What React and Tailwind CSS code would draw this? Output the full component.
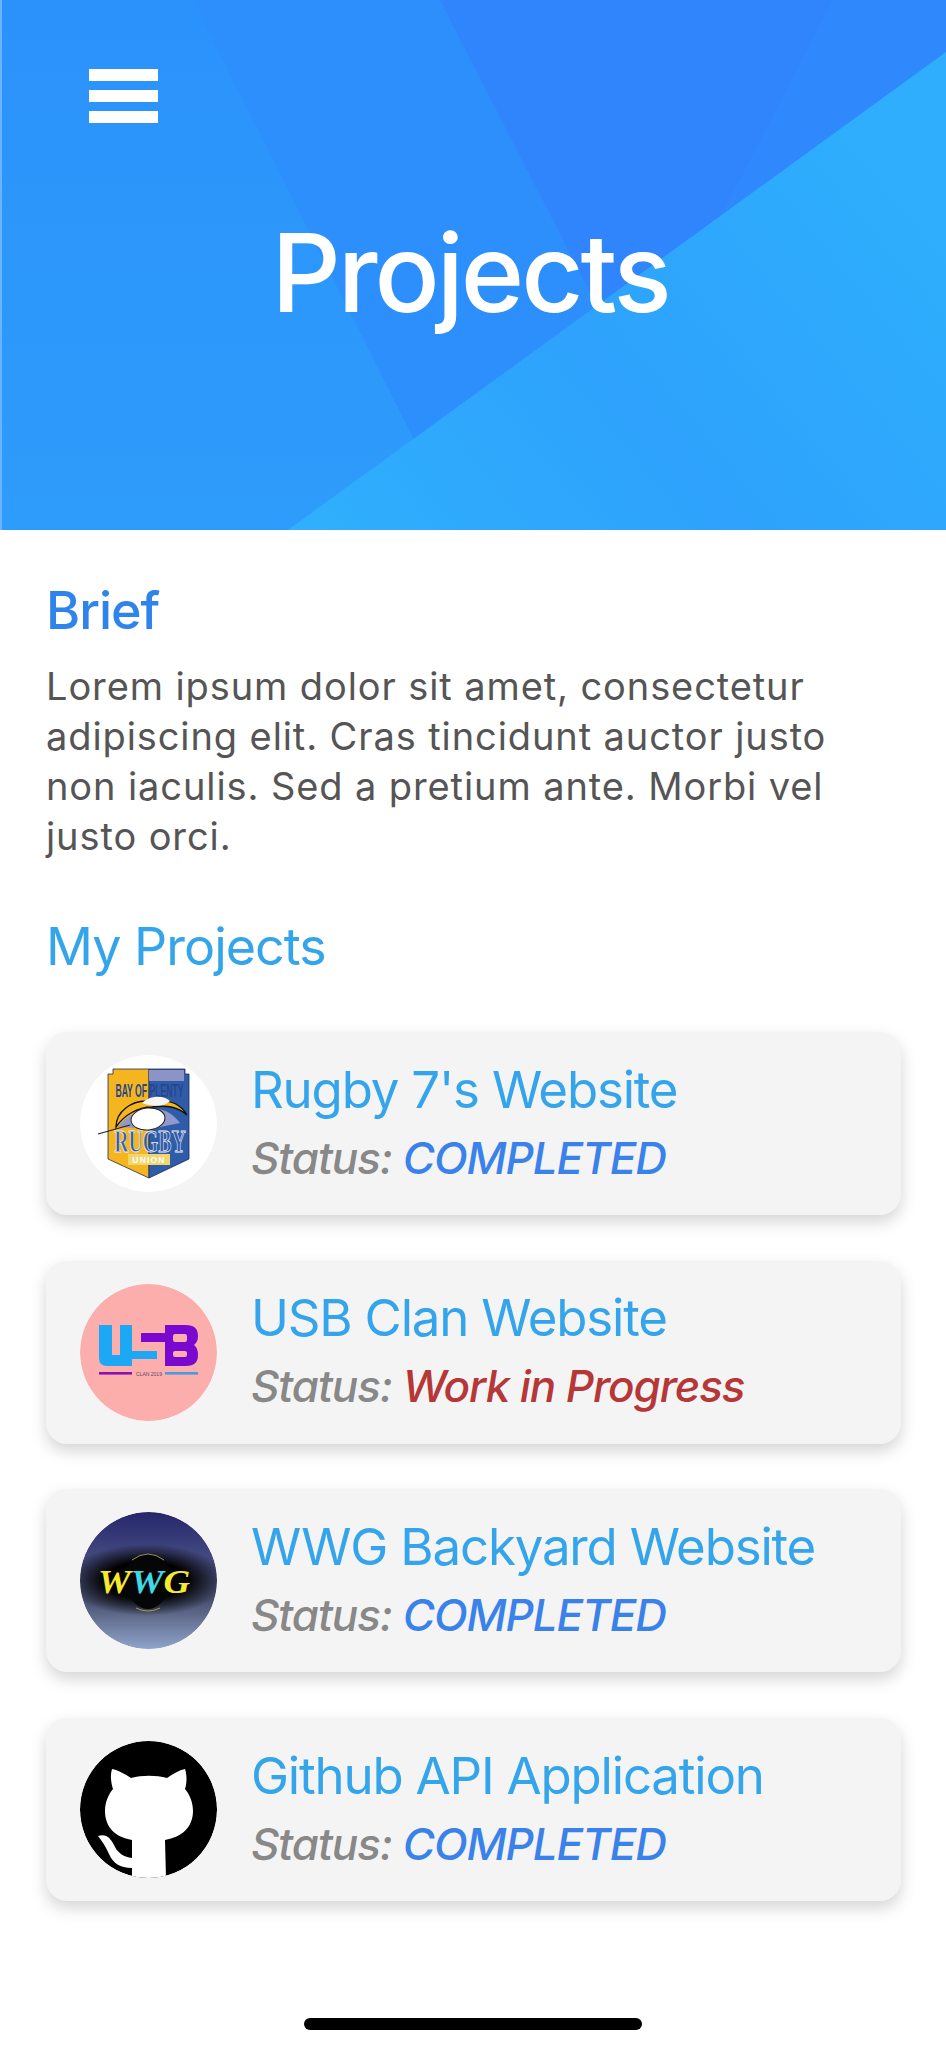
import React from 'react';

const projects = [
    { name: "Rugby 7's Website", status: 'COMPLETED', logo: 'rugby' },
    { name: 'USB Clan Website', status: 'Work in Progress', logo: 'usb' },
    { name: 'WWG Backyard Website', status: 'COMPLETED', logo: 'wwg' },
    { name: 'Github API Application', status: 'COMPLETED', logo: 'github' },
];

const HeaderArt = () => (
    <svg className="absolute inset-0 w-full h-full" viewBox="0 0 946 530" preserveAspectRatio="none">
        <defs>
            <linearGradient id="hbase" x1="0" y1="0" x2="0" y2="1">
                <stop offset="0" stopColor="#2b92fb" />
                <stop offset="1" stopColor="#2e9cfb" />
            </linearGradient>
            <linearGradient id="hlight" x1="0" y1="1" x2="1" y2="0.4">
                <stop offset="0" stopColor="#2fb0fc" />
                <stop offset="0.5" stopColor="#2ea2fc" />
                <stop offset="1" stopColor="#2eaefc" />
            </linearGradient>
        </defs>
        <rect width="946" height="530" fill="url(#hbase)" />
        <rect width="2" height="530" fill="#6ab4fb" />
        <polygon points="193,0 946,0 946,52 415,442" fill="#2d8ffc" />
        <polygon points="440,0 946,0 946,52 598,308" fill="#3085fd" />
        <polygon points="833,0 946,0 946,52 720,218" fill="#2f89fd" />
        <polygon points="946,52 946,530 288,530" fill="url(#hlight)" />
    </svg>
);

const RugbyLogo = () => (
    <svg viewBox="0 0 137 137" className="w-full h-full">
        <circle cx="68.5" cy="68.5" r="68.5" fill="#ffffff" />
        <polygon points="33,14 69,14 69,123 28,104 28,19 33,19" fill="#f4b51e" stroke="#1d2a55" strokeWidth="0.8" />
        <polygon points="69,14 105,14 105,19 109,19 109,104 69,123" fill="#2f5ca8" stroke="#1d2a55" strokeWidth="0.8" />
        <polygon points="69,15 104,15 104,26 69,26" fill="#8e93c6" />
        <text transform="translate(69.5 42) scale(0.48 1)" textAnchor="middle" fontFamily="'Liberation Sans', sans-serif" fontWeight="700" fontSize="18" fill="#27458e">BAY OF PLENTY</text>
        <path d="M36 72 C36 56 52 46 66 46 C80 44 98 44 107 60 C98 52 88 50 72 52 C58 52 44 60 36 72Z" fill="#f4b51e" stroke="#111111" strokeWidth="1.4" />
        <path d="M38 72 C46 60 60 54 74 54 C86 54 94 60 100 68 L70 74Z" fill="#9298c9" />
        <path d="M62 48 C70 40 84 40 90 46 C84 52 72 52 62 48Z" fill="#f6f6f6" />
        <ellipse cx="68" cy="64" rx="17" ry="11" fill="#ffffff" stroke="#222222" strokeWidth="1" transform="rotate(-6 68 64)" />
        <path d="M18 79 L50 70" stroke="#222222" strokeWidth="1.2" />
        <text transform="translate(70 97) scale(0.62 1)" textAnchor="middle" fontFamily="'Liberation Serif', serif" fontWeight="700" fontSize="32" fill="#2f5ca8" stroke="#f0f0f8" strokeWidth="0.8">RUGBY</text>
        <rect x="48" y="99" width="42" height="11" fill="#f2d66b" />
        <text x="69" y="108" textAnchor="middle" fontFamily="'Liberation Sans', sans-serif" fontWeight="700" fontSize="8.5" letterSpacing="1.2" fill="#ffffff">UNION</text>
    </svg>
);

const UsbLogo = () => (
    <svg viewBox="0 0 137 137" className="w-full h-full">
        <circle cx="68.5" cy="68.5" r="68.5" fill="#fbaeac" />
        <path d="M19 41 H32 V71 H40 V41 H52 V67 H77 V75 H52 V82 H27 Q19 82 19 74Z" fill="#1ca8f4" />
        <path d="M61 49 H85 V41 H106 Q118 41 118 52 Q118 58 114 61 Q118 64 118 71 Q118 82 106 82 H85 V58 H61Z" fill="#7a08cf" />
        <rect x="93" y="50" width="14" height="8" rx="2" fill="#fbaeac" />
        <rect x="93" y="67" width="14" height="6" rx="2" fill="#fbaeac" />
        <rect x="19" y="88" width="33" height="2.6" fill="#8a10b8" />
        <text x="69" y="91.5" textAnchor="middle" fontFamily="'Liberation Sans', sans-serif" fontSize="5" fill="#5b4a66">CLAN 2019</text>
        <rect x="85" y="88" width="33" height="2.6" fill="#4a9ae0" />
    </svg>
);

const WwgLogo = () => (
    <svg viewBox="0 0 137 137" className="w-full h-full">
        <defs>
            <linearGradient id="wwgbg" x1="0" y1="0" x2="0" y2="1">
                <stop offset="0" stopColor="#25266a" />
                <stop offset="0.3" stopColor="#42477f" />
                <stop offset="0.65" stopColor="#4a5270" />
                <stop offset="1" stopColor="#8fa3cb" />
            </linearGradient>
            <radialGradient id="wwgglow" cx="0.5" cy="0.5" r="0.5">
                <stop offset="0.5" stopColor="#000000" />
                <stop offset="1" stopColor="#000000" stopOpacity="0" />
            </radialGradient>
        </defs>
        <circle cx="68.5" cy="68.5" r="68.5" fill="url(#wwgbg)" />
        <ellipse cx="66" cy="68" rx="80" ry="36" fill="url(#wwgglow)" />
        <path d="M26 68 C48 62 52 42 68 42 C84 42 88 62 110 68 C88 74 84 97 68 97 C52 97 48 74 26 68Z" fill="#060606" />
        <path d="M52 48 Q68 36 84 48" fill="none" stroke="#b9b44a" strokeWidth="0.8" />
        <path d="M56 96 Q68 102 80 96" fill="none" stroke="#b9b44a" strokeWidth="0.8" />
        <text x="64" y="81" textAnchor="middle" fontFamily="'Liberation Serif', serif" fontWeight="700" fontStyle="italic" fontSize="34" textLength="92" lengthAdjust="spacingAndGlyphs" fill="#f7e92e">W<tspan fill="#3fd8e6">W</tspan>G</text>
    </svg>
);

const GithubLogo = () => (
    <svg viewBox="0 0 137 137" className="w-full h-full">
        <clipPath id="ghclip"><circle cx="68.5" cy="68.5" r="68.5" /></clipPath>
        <circle cx="68.5" cy="68.5" r="68.5" fill="#000000" />
        <g clipPath="url(#ghclip)" fill="#ffffff">
            <path d="M32 28 C38 29 45 33 51 37 C62 34 76 34 87 37 C93 33 99 29 105 28 C107 34 107 42 105 48 C110 54 113 62 113 70 C113 86 102 96 85 99 L86 137 H52 L52 99 C35 96 25 86 25 70 C25 62 28 54 33 48 C31 42 30 34 32 28Z" />
            <path d="M18 95 C26 92 31 97 35 106 C38 112 44 116 52 117 V127 C40 127 33 122 29 113 C26 106 22 100 18 95Z" />
        </g>
    </svg>
);

const logos = { rugby: RugbyLogo, usb: UsbLogo, wwg: WwgLogo, github: GithubLogo };

const ProjectCard = ({ name, status, logo }) => {
    const Logo = logos[logo];
    return (
        <div className="flex items-center h-[183px] pl-[34px] rounded-[21px] bg-[#f4f4f4] shadow-[0_7px_16px_rgba(0,0,0,0.17)]">
            <div className="w-[137px] h-[137px] shrink-0 rounded-full overflow-hidden">
                <Logo />
            </div>
            <div className="ml-[34px] flex flex-col">
                <div className="text-[51px] leading-[69px] text-[#34a5ea] tracking-[-1.2px]">{name}</div>
                <div className="text-[44px] leading-[69px] italic font-medium text-[#888888] tracking-[-1.1px]">
                    Status:{' '}
                    <span className={status === 'COMPLETED' ? 'text-[#3a82ea]' : 'text-[#b53737]'}>{status}</span>
                </div>
            </div>
        </div>
    );
};

const App = () => {
    return (
        <div className="relative w-[946px] h-[2048px] bg-white overflow-hidden font-['Inter',sans-serif]">
            <header className="relative h-[530px]">
                <HeaderArt />
                <div className="relative pl-[89px] pt-[69px] flex flex-col gap-[9px]">
                    <div className="w-[69px] h-[12px] bg-white" />
                    <div className="w-[69px] h-[12px] bg-white" />
                    <div className="w-[69px] h-[12px] bg-white" />
                </div>
                <h1 className="relative mt-[85px] pr-[6px] text-center text-[108px] leading-[130px] font-medium text-white tracking-[-3px]">Projects</h1>
            </header>
            <main className="pl-[46px] pr-[45px] pt-[48px]">
                <h2 className="text-[52px] leading-[66px] font-medium text-[#2f84ec] tracking-[-1px]">Brief</h2>
                <p className="mt-[17px] text-[38px] leading-[50px] text-[#555555] tracking-[0.9px]">
                    Lorem ipsum dolor sit amet, consectetur adipiscing elit. Cras tincidunt auctor justo non iaculis. Sed a pretium ante. Morbi vel justo orci.
                </p>
                <h2 className="mt-[53px] text-[52px] leading-[66px] text-[#34a5ea] tracking-[-1px]">My Projects</h2>
                <div className="mt-[52px] flex flex-col gap-[45.7px]">
                    {projects.map((p) => (
                        <ProjectCard key={p.name} {...p} />
                    ))}
                </div>
            </main>
            <div className="absolute left-[304px] bottom-[18px] w-[338px] h-[12px] rounded-full bg-black" />
        </div>
    );
};

export default App;
